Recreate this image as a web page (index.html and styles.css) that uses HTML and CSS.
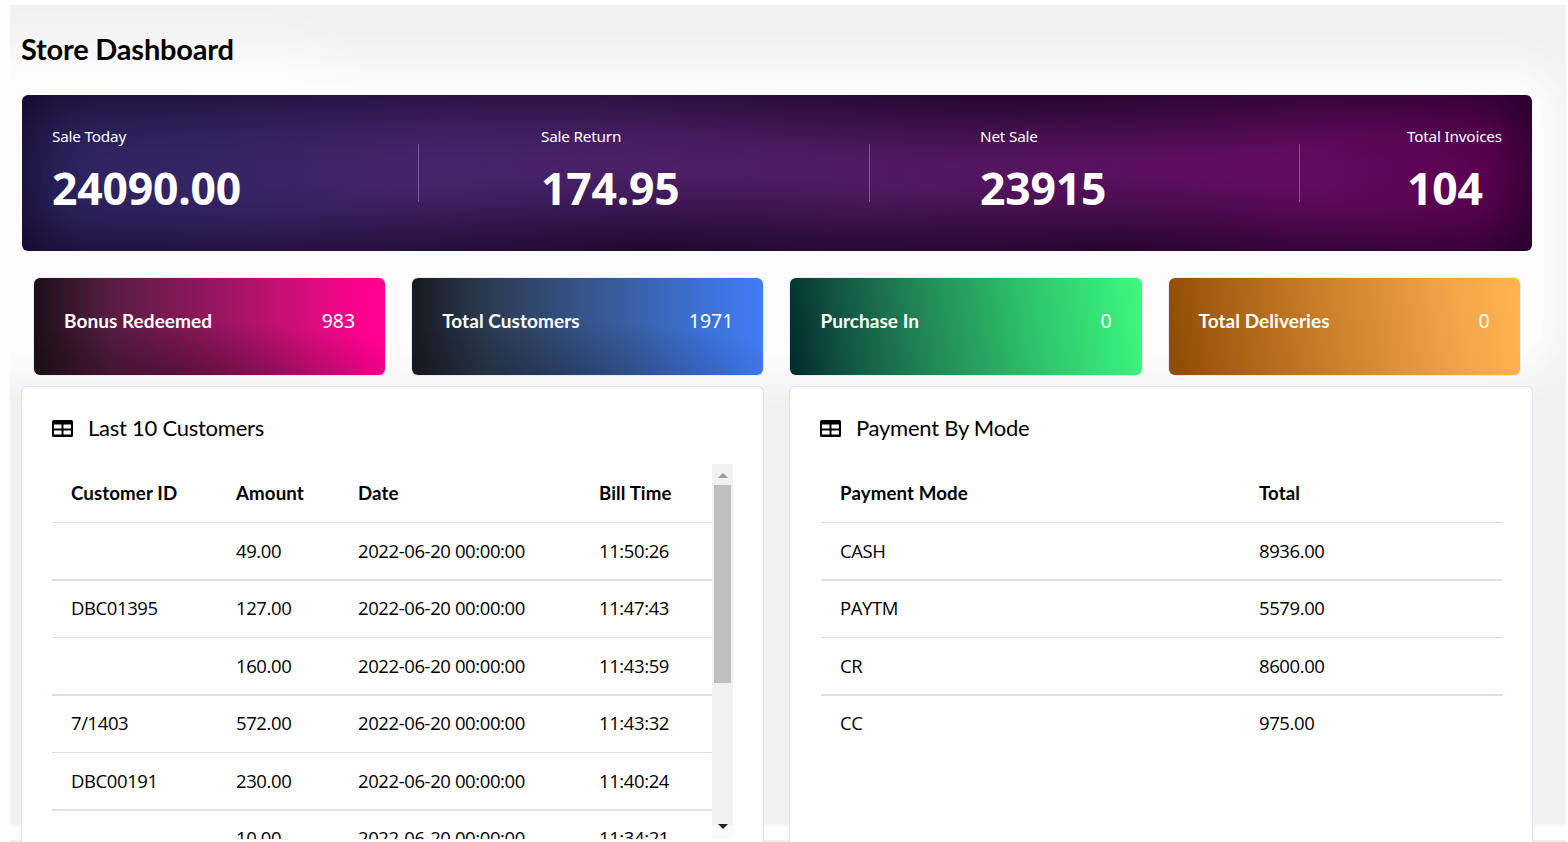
FILE: index.html
```html
<!DOCTYPE html>
<html lang="en">
<head>
<meta charset="utf-8">
<title>Store Dashboard</title>
<link rel="stylesheet" href="styles.css">
</head>
<body>
<div class="page">
  <main class="surface">
    <h1 class="page-title">Store Dashboard</h1>

    <section class="sales">
      <div class="stat"><span class="stat-label">Sale Today</span><strong class="stat-value">24090.00</strong></div>
      <span class="divider"></span>
      <div class="stat"><span class="stat-label">Sale Return</span><strong class="stat-value">174.95</strong></div>
      <span class="divider"></span>
      <div class="stat"><span class="stat-label">Net Sale</span><strong class="stat-value">23915</strong></div>
      <span class="divider"></span>
      <div class="stat"><span class="stat-label">Total Invoices</span><strong class="stat-value">104</strong></div>
    </section>

    <section class="tiles">
      <div class="tile tile-pink"><b>Bonus Redeemed</b><span>983</span></div>
      <div class="tile tile-blue"><b>Total Customers</b><span>1971</span></div>
      <div class="tile tile-green"><b>Purchase In</b><span>0</span></div>
      <div class="tile tile-orange"><b>Total Deliveries</b><span>0</span></div>
    </section>

    <section class="panels">
      <article class="panel">
        <h2 class="panel-title">
          <svg class="icon" viewBox="0 0 21 17"><path fill-rule="evenodd" d="M1.500 0h18A1.500 1.500 0 0 1 21 1.500v14a1.500 1.500 0 0 1-1.500 1.500h-18A1.500 1.500 0 0 1 0 15.500v-14A1.500 1.500 0 0 1 1.500 0zM2 4.500h7.500v4H2zM11.500 4.500H19v4h-7.500zM2 10.500h7.500v4H2zM11.500 10.500H19v4h-7.500z"/></svg>
          <span>Last 10 Customers</span>
        </h2>
        <div class="scroller">
          <div class="table customers">
            <div class="row head"><span>Customer ID</span><span>Amount</span><span>Date</span><span>Bill Time</span></div>
            <div class="row"><span></span><span>49.00</span><span>2022-06-20 00:00:00</span><span>11:50:26</span></div>
            <div class="row"><span>DBC01395</span><span>127.00</span><span>2022-06-20 00:00:00</span><span>11:47:43</span></div>
            <div class="row"><span></span><span>160.00</span><span>2022-06-20 00:00:00</span><span>11:43:59</span></div>
            <div class="row"><span>7/1403</span><span>572.00</span><span>2022-06-20 00:00:00</span><span>11:43:32</span></div>
            <div class="row"><span>DBC00191</span><span>230.00</span><span>2022-06-20 00:00:00</span><span>11:40:24</span></div>
            <div class="row"><span></span><span>10.00</span><span>2022-06-20 00:00:00</span><span>11:34:21</span></div>
          </div>
          <div class="scrollbar"><i class="arrow up"></i><i class="thumb"></i><i class="arrow down"></i></div>
        </div>
      </article>

      <article class="panel">
        <h2 class="panel-title">
          <svg class="icon" viewBox="0 0 21 17"><path fill-rule="evenodd" d="M1.500 0h18A1.500 1.500 0 0 1 21 1.500v14a1.500 1.500 0 0 1-1.500 1.500h-18A1.500 1.500 0 0 1 0 15.500v-14A1.500 1.500 0 0 1 1.500 0zM2 4.500h7.500v4H2zM11.500 4.500H19v4h-7.500zM2 10.500h7.500v4H2zM11.500 10.500H19v4h-7.500z"/></svg>
          <span>Payment By Mode</span>
        </h2>
        <div class="table payments">
          <div class="row head"><span>Payment Mode</span><span>Total</span></div>
          <div class="row"><span>CASH</span><span>8936.00</span></div>
          <div class="row"><span>PAYTM</span><span>5579.00</span></div>
          <div class="row"><span>CR</span><span>8600.00</span></div>
          <div class="row last"><span>CC</span><span>975.00</span></div>
        </div>
      </article>
    </section>
  </main>
</div>
</body>
</html>
```
FILE: styles.css
```css
* { box-sizing: border-box; }

body {
  margin: 0;
  background: #fdfdfd;
  color: #000;
  font-family: Lato, "Open Sans", sans-serif;
}

.page {
  height: 842px;
  padding: 5px 2px 0 10px;
  overflow: hidden;
}

.surface {
  position: relative;
  display: flex;
  flex-direction: column;
  height: 837px;
  padding: 0 34px 0 12px;
  overflow: hidden;
  background: linear-gradient(#f1f1f1 818px, #fcfcfc 822px, #fcfcfc 835px, #eeeeee 835px);
}

/* soft white glow behind the summary area */
.surface::before {
  content: "";
  position: absolute;
  left: -60px;
  right: 24px;
  top: 80px;
  height: 271px;
  border-radius: 30px;
  background: #fcfcfc;
  box-shadow: 0 0 36px 22px #fcfcfc, -1220px -20px 60px 10px #fcfcfc;
}

.surface > * { position: relative; }

.page-title {
  margin: 0 0 0 -1px;
  height: 90px;
  padding-top: 23px;
  font-size: 29px;
  line-height: 42px;
  font-weight: 700;
  letter-spacing: -.2px;
}

.sales {
  display: grid;
  grid-template-columns: 366px 123px 328px 111px 319px 108px 1fr;
  height: 156px;
  padding: 30px 0 0 30px;
  border-radius: 6px;
  color: #fff;
  background:
    radial-gradient(ellipse 420px 80px at 42% 100%, rgba(20, 0, 30, .45), transparent),
    radial-gradient(ellipse 420px 70px at 66% 0, rgba(20, 0, 30, .4), transparent),
    radial-gradient(ellipse 300px 80px at 72% 100%, rgba(20, 0, 30, .4), transparent),
    linear-gradient(90deg, #2b2561 0%, #46256c 28%, #521a63 57%, #640b60 85%, #5c0052 100%);
  box-shadow: inset 0 0 64px 6px rgba(12, 0, 24, .8);
}

.stat { display: flex; flex-direction: column; font-family: "Noto Sans", "Open Sans", sans-serif; }
.stat-label { font-size: 15.300px; line-height: 22px; letter-spacing: -.2px; }
.stat-value { font-size: 44.500px; line-height: 60px; margin-top: 11px; font-weight: 700; letter-spacing: -.2px; }
.divider { width: 1px; height: 58px; margin-top: 19px; background: rgba(205, 160, 215, .45); }

.tiles {
  display: grid;
  grid-template-columns: repeat(4, 351.200px);
  gap: 27px;
  margin: 27px 0 0 12px;
}

.tile {
  display: flex;
  justify-content: space-between;
  height: 97px;
  padding: 30px 30px 0;
  border-radius: 6px;
  color: #fff;
  box-shadow: 0 0 0 1px rgba(222, 220, 240, .5);
}

.tile b { font-size: 19px; line-height: 25px; letter-spacing: .05px; }
.tile span { font-family: "Noto Sans", sans-serif; font-size: 19.500px; line-height: 26px; }
.tile-pink { background: radial-gradient(ellipse 260px 60px at 42% 105%, rgba(0,0,0,.35), transparent), linear-gradient(90deg, #1c1018, #581d42 22%, #971660 52%, #de0c80 80%, #ff0090 95%); }
.tile-blue { background: radial-gradient(ellipse 260px 60px at 42% 105%, rgba(0,0,0,.25), transparent), linear-gradient(90deg, #171a20, #2d3b52 22%, #385d9d 58%, #3d72da 84%, #407df5); }
.tile-green { background: linear-gradient(80deg, #002a2a, #125443 16%, #228a57 40%, #2fcb6d 72%, #3dfa80); }
.tile-orange { background: linear-gradient(80deg, #8d4a00, #a96015 18%, #cf852c 50%, #f0a548 80%, #ffb550); }

.panels {
  display: grid;
  grid-template-columns: 743px 744px;
  gap: 25px;
  margin: 11px 0 0 -1px;
  flex: 1;
}

.panel {
  display: flex;
  flex-direction: column;
  padding: 28px 30px 0;
  border: 1px solid #dfddee;
  border-bottom: 0;
  border-radius: 6px 6px 0 0;
  background: #fff;
}

.panel-title {
  display: flex;
  align-items: center;
  gap: 15px;
  height: 49px;
  margin: 0;
  padding-bottom: 23px;
  font-size: 22px;
  line-height: 25px;
  font-weight: 400;
  letter-spacing: -.25px;
}

.panel-title span { padding-bottom: 2px; }
.icon { width: 21px; height: 17px; }

.scroller { display: flex; height: 375px; overflow: hidden; }
.customers { flex: 1; overflow: hidden; }
.customers .row { grid-template-columns: 165px 122px 241px 1fr; }
.payments { margin-left: 1px; }
.payments .row { grid-template-columns: 419px 1fr; }

.row {
  display: grid;
  align-items: center;
  height: 57px;
  padding: 0 0 2px 19px;
  border-bottom: 1px solid #dfddee;
  font-family: "Open Sans", "Noto Sans", sans-serif;
  font-size: 18.500px;
  line-height: 26px;
  letter-spacing: -.4px;
}

.row:nth-child(even) { height: 58px; padding-bottom: 0; border-bottom-width: 2px; }
.row.head {
  height: 59px;
  padding-bottom: 0;
  font-family: Lato, sans-serif;
  font-size: 18.700px;
  font-weight: 700;
  letter-spacing: .1px;
}
.row.last { padding-bottom: 3px; border-bottom: 0; }

.scrollbar {
  display: flex;
  flex-direction: column;
  align-items: center;
  width: 21px;
  background: linear-gradient(#f1f1f1 360px, #fbfbfb 363px);
}

.thumb { width: 17px; height: 198px; margin: 7px 0 140px; background: #bfbfbf; }
.arrow { border: 5px solid transparent; border-top: 0; border-bottom: 5px solid #9c9c9c; margin-top: 9px; }
.arrow.down { margin-top: 1px; border-top: 5px solid #222; border-bottom: 0; }
```
